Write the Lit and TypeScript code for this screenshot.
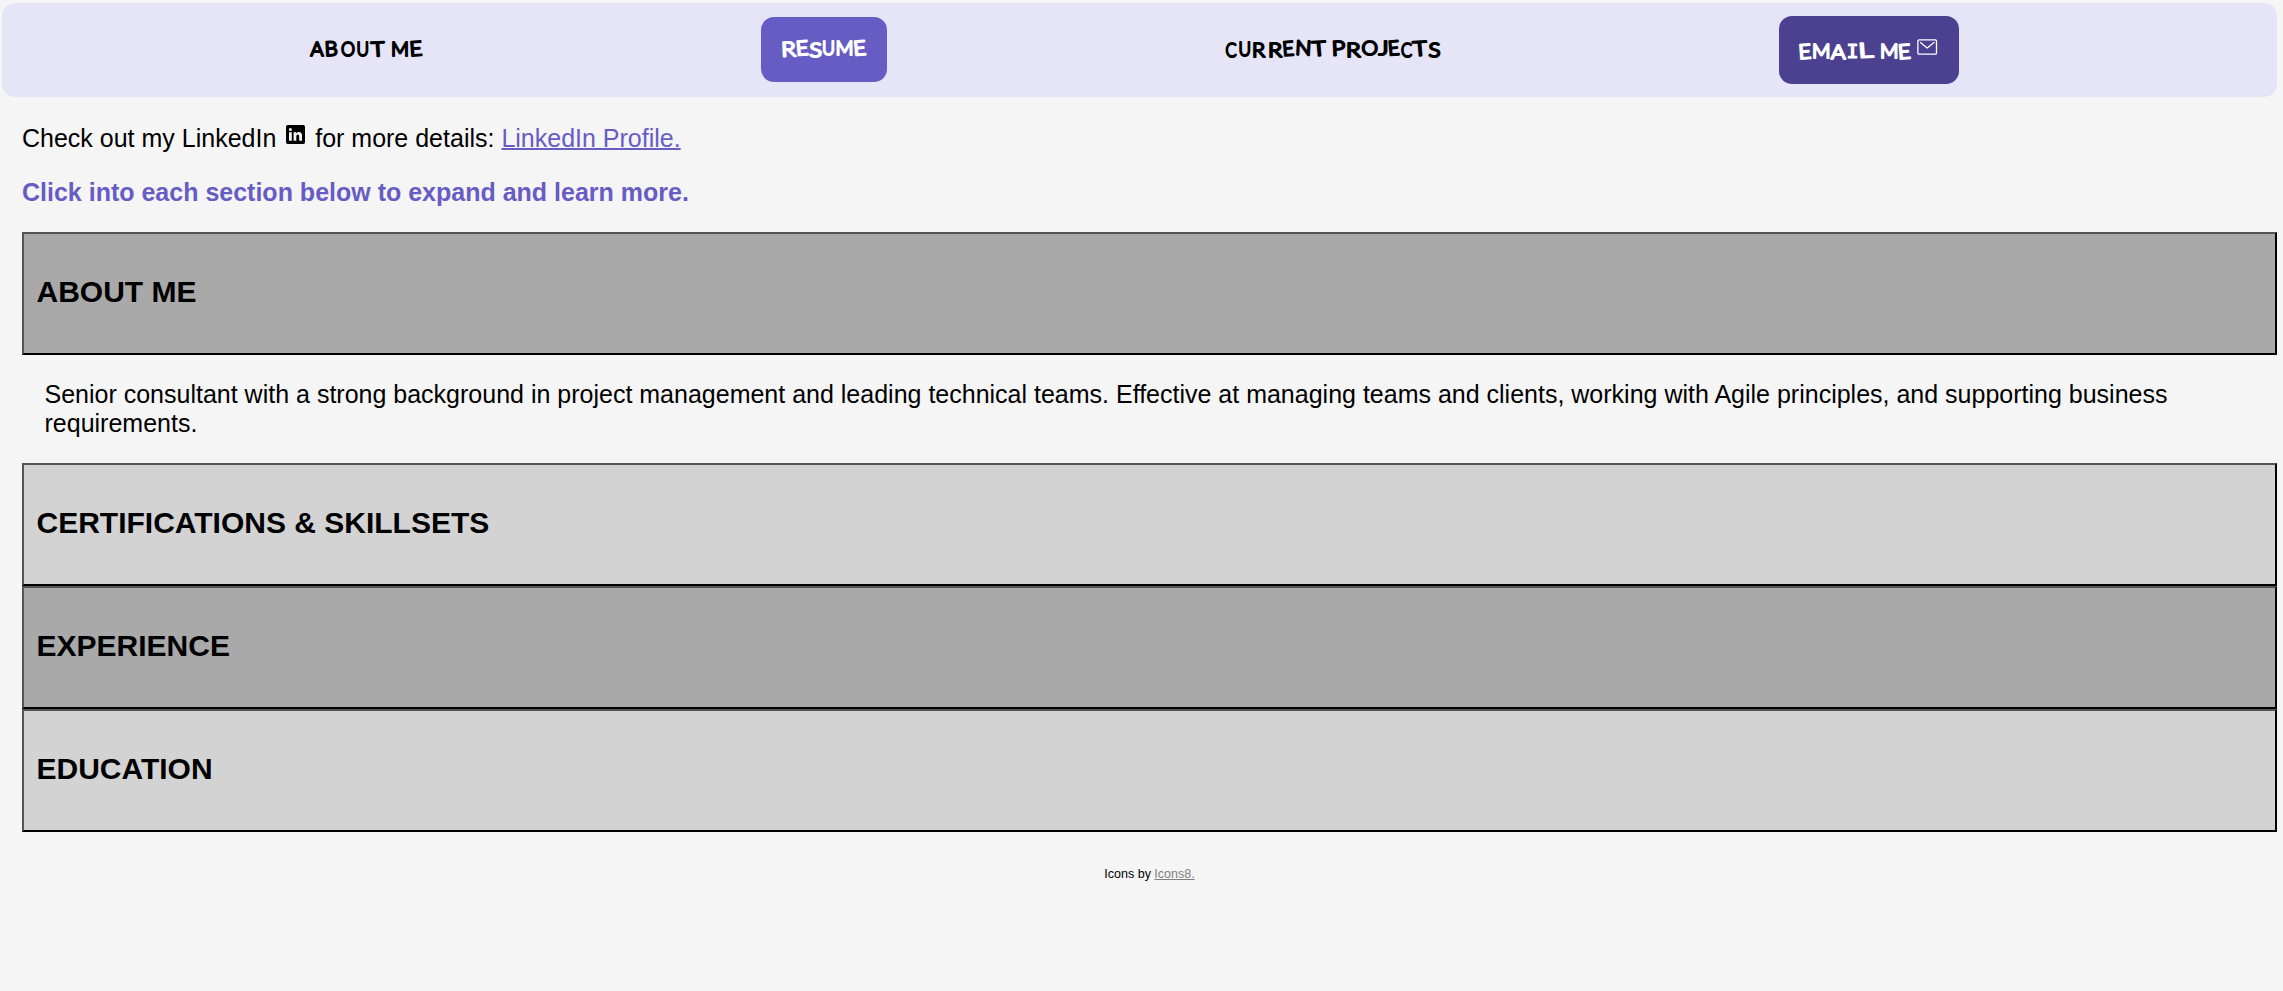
import { LitElement, html, css, svg } from "lit";
import { customElement, property } from "lit/decorators.js";

// One letter of a nav label: glyph, left edge, width, baseline, tilt in degrees.
type Letter = [string, number, number, number, number];

interface NavItem {
  label: string;
  width: number;
  kind: string;
  mail?: boolean;
  letters: Letter[];
}

const NAV: NavItem[] = [
  {
    label: "ABOUT ME", width: 113, kind: "plain",
    letters: [["A", 0.5, 13, 20, 0], ["B", 15, 13, 20, -3], ["O", 31, 14, 20, 0], ["U", 46.5, 12.5, 19.5, 0], ["T", 61.5, 13.5, 20.5, -3],
      [" ", 75, 6, 20, 0], ["M", 81, 18, 19.5, 0], ["E", 100, 12.5, 20, -4]],
  },
  {
    label: "RESUME", width: 86, kind: "resume",
    letters: [["R", 0.5, 14.5, 22.5, -2], ["E", 15.5, 12.5, 21.5, -5], ["S", 28.5, 12.5, 22.5, 0], ["U", 41, 13, 21, 0], ["M", 54.5, 18, 20.5, 0],
      ["E", 73, 12.5, 21.5, -5]],
  },
  {
    label: "CURRENT PROJECTS", width: 216, kind: "plain",
    letters: [["C", 0.5, 11, 20.5, 0], ["U", 13.5, 12.5, 19.5, 0], ["R", 27, 13, 20.5, 0], ["R", 43, 14, 20.5, 0], ["E", 58, 11.5, 20, -5],
      ["N", 70, 16, 18.5, 3], ["T", 87.5, 14, 20, -4], [" ", 101, 6, 20, 0], ["P", 107, 13.5, 19.5, -2], ["R", 121, 14.5, 20.5, 0],
      ["O", 136.5, 16.5, 19, 0], ["J", 153.5, 10, 18.5, 0], ["E", 163.5, 11.5, 19.5, -5], ["C", 176, 11, 20.5, 0], ["T", 188.5, 14, 20, -4],
      ["S", 203.5, 12, 20.5, 0]],
  },
  {
    label: "EMAIL ME", width: 140, kind: "email", mail: true,
    letters: [["E", 0, 12.5, 23, -4], ["M", 13, 18.5, 22, 0], ["A", 32, 14.5, 23, 0], ["I", 47.5, 12, 22, 0], ["L", 60, 14.5, 21.5, -3],
      [" ", 75, 5, 22.5, 0], ["M", 81, 18.5, 22, 0], ["E", 99.5, 12.5, 23, -4]],
  },
];

@customElement("nav-label")
class NavLabel extends LitElement {
  @property({ attribute: false }) item!: NavItem;

  static styles = css`
    :host { display: block; }
    .label { display: block; overflow: visible; }
    .hand {
      font: 300 20px Lato, sans-serif;
      fill: currentColor;
      stroke: currentColor;
      stroke-width: 2.1px;
      stroke-linejoin: round;
      white-space: pre;
    }
    .serifed { font-family: "DejaVu Sans Mono", monospace; font-size: 19px; stroke-width: 1.2px; }
    .mail { fill: none; stroke: currentColor; stroke-width: 1.3px; stroke-linejoin: round; stroke-linecap: round; }
  `;

  render() {
    const { label, width, letters, mail } = this.item;
    return html`<svg class="label" width=${width} height="28" viewBox="0 0 ${width} 28" aria-label=${label}>
      <text class="hand">${letters.map(([ch, x, w, y, tilt]) =>
        svg`<tspan class=${ch === "I" ? "serifed" : "letter"} x=${x} y=${y} rotate=${tilt} textLength=${w} lengthAdjust="spacingAndGlyphs">${ch}</tspan>`)}</text>
      ${mail ? svg`<g class="mail"><rect x="118.9" y="3.9" width="18.6" height="14.2" rx="1.2"/><path d="M121.5 6.6 L128.2 12 L135 6.6"/></g>` : null}
    </svg>`;
  }
}

@customElement("app-root")
class AppRoot extends LitElement {
  static styles = css`
    :host {
      display: block;
      box-sizing: border-box;
      min-height: 991px;
      padding: 3px 6px 0 2px;
      background: #f5f5f5;
      color: #000;
      font: 25px/29px "Liberation Sans", Arial, sans-serif;
    }
    .nav {
      display: flex;
      align-items: center;
      gap: 318px;
      box-sizing: border-box;
      height: 94px;
      padding-left: 288px;
      border-radius: 13px;
      background: #e6e5f8;
    }
    .item {
      display: flex;
      align-items: center;
      box-sizing: border-box;
      height: 65px;
      margin-bottom: 1px;
      padding: 0 20px;
      border-radius: 13px;
      color: #000;
      text-decoration: none;
    }
    .resume { background: #675cc4; color: #fff; }
    .resume nav-label { margin-bottom: 3px; }
    .email { height: 68px; margin-bottom: 0; background: #4b4190; color: #fff; }
    .content { padding-left: 20px; }
    .intro { margin: 25px 0 0; height: 29px; }
    .linkedin { display: inline-block; width: 25px; height: 25px; vertical-align: baseline; }
    .profile { color: #675cc4; text-decoration-thickness: 2px; }
    .hint { margin: 27px 0 0; color: #675cc4; font-weight: 700; }
    .sections { margin-top: 25px; }
    .bar {
      display: flex;
      align-items: center;
      box-sizing: border-box;
      width: 100%;
      height: 123px;
      padding: 0 12.5px 4px;
      border: 2px outset #000;
      background: #d3d3d3;
      color: #000;
      font: 700 30px/36px "Liberation Sans", Arial, sans-serif;
      text-align: left;
    }
    .dark { background: #a9a9a9; }
    .panel { margin: 0; padding: 25px 22.5px; }
    .credit { margin: 33px 0 0; font-size: 12.5px; line-height: 18px; text-align: center; }
    .icons8 { color: #808080; }
  `;

  render() {
    return html`
      <nav class="nav">
        ${NAV.map((item) => html`<a class="item ${item.kind}"><nav-label .item=${item}></nav-label></a>`)}
      </nav>
      <main class="content">
        <p class="intro">Check out my LinkedIn <svg class="linkedin" viewBox="0 0 25 25"><path fill="#000" fill-rule="evenodd" d="M4.8 3H20.2Q22 3 22 4.8V20.2Q22 22 20.2 22H4.8Q3 22 3 20.2V4.8Q3 3 4.8 3ZM6 10.2V18.8H8.8V10.2ZM7.4 6A1.55 1.55 0 1 0 7.4 9.1A1.55 1.55 0 1 0 7.4 6ZM10.6 10.2V18.8H13.3V14.4Q13.3 12.4 14.8 12.4Q16.2 12.4 16.2 14.4V18.8H19V13.7Q19 10 15.9 10Q14.1 10 13.3 11.4V10.2Z"/></svg> for more details: <a class="profile" href="#">LinkedIn Profile.</a></p>
        <p class="hint">Click into each section below to expand and learn more.</p>
        <div class="sections">
          <button class="bar dark">ABOUT ME</button>
          <p class="panel">Senior consultant with a strong background in project management and leading technical teams. Effective at managing teams and clients, working with Agile principles, and supporting business requirements.</p>
          <button class="bar">CERTIFICATIONS &amp; SKILLSETS</button>
          <button class="bar dark">EXPERIENCE</button>
          <button class="bar">EDUCATION</button>
        </div>
        <p class="credit">Icons by <a class="icons8" href="#">Icons8.</a></p>
      </main>
    `;
  }
}
